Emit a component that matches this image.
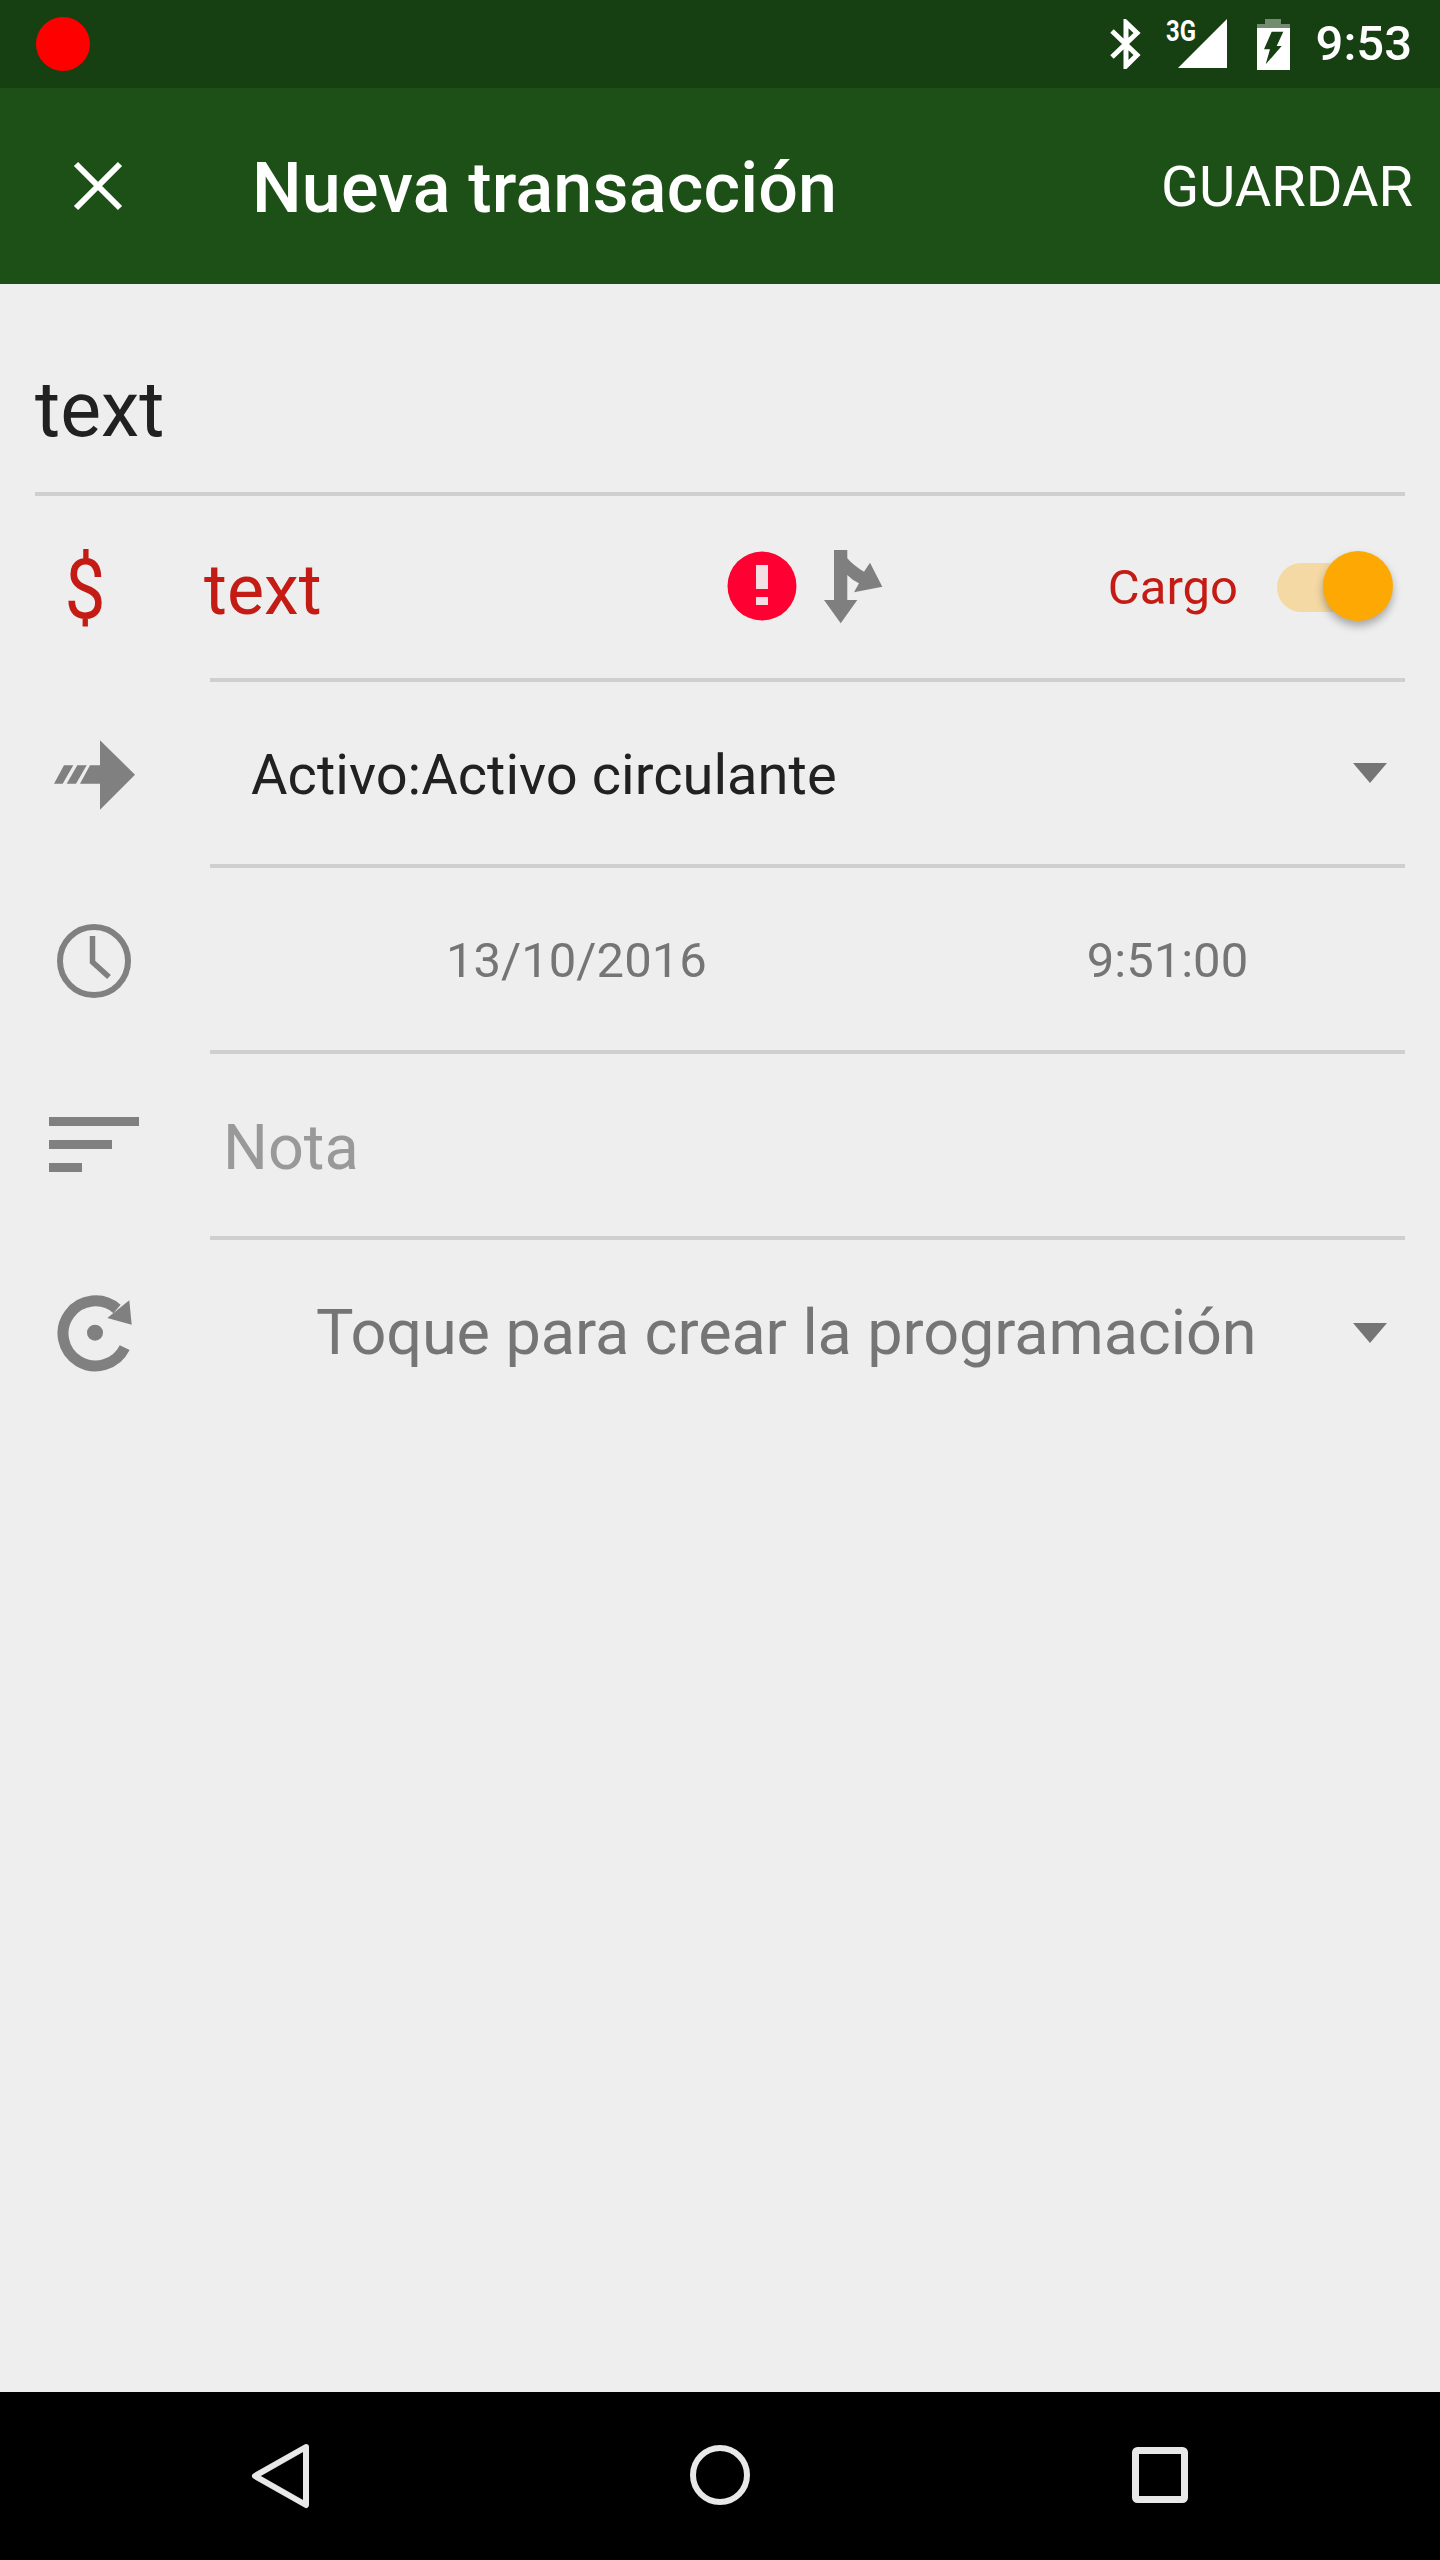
<div class="screen">
  <header class="status">
    <span class="rec"></span>
    <svg class="bt" viewBox="0 0 31 50"><path d="M2 12 L27 36 L16 47 V3.5 L27 14 L2 38" fill="none" stroke="#fff" stroke-width="5"/></svg>
    <svg class="sig" viewBox="0 0 62 50">
      <text x="0" y="22" textLength="30" lengthAdjust="spacingAndGlyphs">3G</text>
      <path d="M61 0 V49 H12 Z" fill="#fff"/>
    </svg>
    <svg class="bat" viewBox="0 0 33 51">
      <path d="M8 0 H24 V5 H33 V9 H0 V5 H8 Z" fill="#fff" opacity=".4"/>
      <path fill-rule="evenodd" d="M0 9 H33 V51 H0 Z M14.7 12.7 H26.3 L19.7 27 H24.7 L8.7 45.3 L13 30.3 H7 Z" fill="#fff"/>
    </svg>
    <span class="clock">9:53</span>
  </header>

  <nav class="bar">
    <svg class="close" viewBox="0 0 50 50"><path d="M3 3 L47 47 M47 3 L3 47" stroke="#fff" stroke-width="6"/></svg>
    <h1>Nueva transacción</h1>
    <span class="save">GUARDAR</span>
  </nav>

  <main class="form">
    <div class="desc"><span>text</span></div>

    <div class="row">
      <span class="dollar">$</span>
      <div class="row-body">
        <span class="amt">text</span>
        <svg class="err" viewBox="0 0 70 70">
          <circle cx="35" cy="35" r="34.5" fill="#ff0033"/>
          <rect x="29" y="14" width="12" height="24" fill="#f3dfe3"/>
          <rect x="29" y="46" width="12" height="8" fill="#f3dfe3"/>
        </svg>
        <svg class="split" viewBox="0 0 60 74">
          <path d="M10 0 H23.3 V8.3 Q30 16 40 21.7 L46 12.7 L58.3 36.7 L30 42.3 L35 33.3 Q28 30 23.3 25 V50 H33.3 L16.7 73.3 L0 50 H10 Z" fill="#7f7f7f"/>
        </svg>
        <span class="cargo">Cargo</span>
        <span class="toggle"><span class="thumb"></span></span>
      </div>
    </div>

    <div class="row">
      <svg class="arrow" viewBox="0 0 82 70">
        <path d="M46 0.3 L81 34.7 L46 69.7 V43.7 H26 L36 25.3 H46 Z" fill="#808080"/>
        <path d="M23.3 25.3 H32.7 L22 43.7 H12.7 Z M10 25.3 H19.3 L8.7 43.7 H0 Z" fill="#808080"/>
      </svg>
      <div class="row-body">
        <span class="account">Activo:Activo circulante</span>
        <span class="caret"></span>
      </div>
    </div>

    <div class="row">
      <svg class="clock-ico" viewBox="0 0 74 74">
        <circle cx="37" cy="37" r="34" fill="none" stroke="#808080" stroke-width="6"/>
        <path d="M35.5 12 V38 L52 53" fill="none" stroke="#808080" stroke-width="5.5"/>
      </svg>
      <div class="row-body when">
        <span class="date">13/10/2016</span>
        <span class="time">9:51:00</span>
      </div>
    </div>

    <div class="row">
      <div class="sort"><i></i><i></i><i></i></div>
      <div class="row-body"><span class="note">Nota</span></div>
    </div>

    <div class="row last">
      <svg class="recur" viewBox="0 0 76 78">
        <path d="M67.7 53.7 A32.5 32.5 0 1 1 60 15" fill="none" stroke="#808080" stroke-width="11"/>
        <path d="M72.3 6.3 L74.7 30.7 L50.3 24 Z" fill="#808080"/>
        <circle cx="38" cy="38.7" r="8" fill="#808080"/>
      </svg>
      <div class="row-body">
        <span class="sched">Toque para crear la programación</span>
        <span class="caret"></span>
      </div>
    </div>
  </main>

  <footer class="nav">
    <svg class="back" viewBox="0 0 58 66"><path d="M55 4 L4 33 L55 62 Z" fill="none" stroke="#e8e8e8" stroke-width="6" stroke-linejoin="round"/></svg>
    <svg class="home" viewBox="0 0 60 60"><circle cx="30" cy="30" r="27" fill="none" stroke="#e8e8e8" stroke-width="6"/></svg>
    <svg class="recent" viewBox="0 0 56 56"><rect x="3.5" y="3.5" width="49" height="49" rx="2" fill="none" stroke="#e8e8e8" stroke-width="7"/></svg>
  </footer>
</div>

<style>
  :global(body) { margin: 0; background: #eee; }
  .screen {
    width: 1440px; height: 2560px; display: flex; flex-direction: column;
    font-family: Roboto, "Liberation Sans", sans-serif; background: #eee; overflow: hidden;
  }
  .status {
    height: 88px; flex: none; background: #163f12; display: flex; align-items: center;
    padding: 0 28px 0 36px; color: #fff;
  }
  .rec { width: 54px; height: 54px; border-radius: 50%; background: #f00; margin-right: auto; }
  .bt { width: 31px; height: 50px; }
  .sig { width: 62px; height: 50px; margin-left: 25px; overflow: visible; }
  .sig text { font: 700 30px Roboto, sans-serif; fill: #fff; }
  .bat { width: 33px; height: 51px; margin-left: 29px; }
  .clock { font-size: 49px; font-weight: 500; margin-left: 26px; line-height: 1.2; }

  .bar {
    height: 196px; flex: none; background: #1d5017; display: flex; align-items: center;
    padding: 0 27px 0 73px; color: #fff;
  }
  .close { width: 50px; height: 50px; }
  h1 { font-size: 70px; font-weight: 500; margin: 4px auto 0 129px; line-height: 1.2; letter-spacing: .2px; }
  .save { font-size: 56px; line-height: 1.2; margin-top: 4px; }

  .form { flex: 1; padding: 0 35px; }
  .desc {
    height: 212px; box-sizing: border-box; border-bottom: 4px solid #cfcfcf;
    display: flex; align-items: flex-end; padding-bottom: 36px;
    font-size: 77px; color: #212121; line-height: 1.2;
  }
  .row { height: 186px; display: flex; align-items: center; }
  .row-body {
    flex: 1; height: 186px; box-sizing: border-box; border-bottom: 4px solid #cfcfcf;
    display: flex; align-items: center; min-width: 0;
  }
  .last > .row-body { border-bottom: 0; }

  .dollar {
    flex: none; font-size: 84px; color: #c41c14; line-height: 1.2; width: 175px; padding-left: 29px;
    box-sizing: border-box; margin-top: 2px; transform: scaleX(.87); transform-origin: 32px center;
  }
  .amt { font-size: 70px; color: #c41c14; line-height: 1.2; margin: 5px 0 0 -6px; }
  .err { width: 70px; height: 70px; margin: 0 0 3px 405px; flex: none; }
  .split { width: 60px; height: 74px; margin-left: 27px; flex: none; }
  .cargo { font-size: 49px; color: #c41c14; margin: 2px 0 0 auto; line-height: 1.2; }
  .toggle { position: relative; width: 93px; height: 49px; border-radius: 25px; background: #f4d9a5; margin: 0 35px 0 39px; flex: none; }
  .thumb {
    position: absolute; right: -23px; top: -12px; width: 70px; height: 70px; border-radius: 50%;
    background: #fea903; box-shadow: 0 5px 8px rgba(0,0,0,.3);
  }
  .caret {
    width: 0; height: 0; border-left: 17px solid transparent; border-right: 17px solid transparent;
    border-top: 20px solid #757575; margin-left: auto; margin-right: 18px;
  }

  .arrow { flex: none; width: 82px; height: 70px; margin: 0 74px 0 19px; }
  .account { font-size: 56px; color: #212121; line-height: 1.2; margin: 5px 0 0 41px; letter-spacing: .03px; }
  .clock-ico { flex: none; width: 74px; height: 74px; margin: 0 79px 0 22px; }
  .when { font-size: 49px; color: #757575; line-height: 1.2; }
  .date { margin: 4px 0 0 236px; }
  .time { margin: 4px 0 0 380px; }
  .sort { flex: none; width: 90px; margin: -5px 71px 0 14px; display: flex; flex-direction: column; gap: 14px; }
  .sort i { display: block; height: 9px; background: #808080; }
  .sort i:nth-child(2) { width: 63px; }
  .sort i:nth-child(3) { width: 33px; }
  .note { font-size: 63px; color: #999; line-height: 1.2; margin: 5px 0 0 13px; }
  .recur { flex: none; width: 76px; height: 78px; margin: 0 77px 0 22px; }
  .sched { font-size: 63px; color: #757575; line-height: 1.2; margin-left: 106px; letter-spacing: -.1px; }

  .nav { height: 168px; flex: none; background: #000; position: relative; }
  .nav svg { position: absolute; }
  .back { left: 251px; top: 51px; width: 58px; height: 66px; }
  .home { left: 690px; top: 53px; width: 60px; height: 60px; }
  .recent { left: 1132px; top: 55px; width: 56px; height: 56px; }
</style>
